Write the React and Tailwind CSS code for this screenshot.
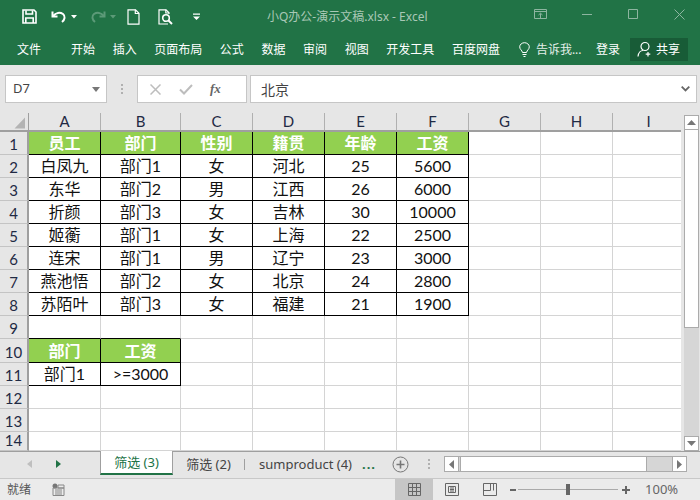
const CJK = "font-['Lato','Noto_Sans_CJK_SC',sans-serif]";
const UI = "font-['Noto_Sans','Noto_Sans_CJK_SC',sans-serif]";

const colWidths = [72, 80, 72, 72, 72, 72, 72, 72, 72];
const colNames = ['A', 'B', 'C', 'D', 'E', 'F', 'G', 'H', 'I'];
const rowHeights = [23, 23, 23, 23, 23, 23, 23, 23, 23, 24, 23, 23, 23, 19];

const data = [
  ['员工', '部门', '性别', '籍贯', '年龄', '工资'],
  ['白凤九', '部门1', '女', '河北', '25', '5600'],
  ['东华', '部门2', '男', '江西', '26', '6000'],
  ['折颜', '部门3', '女', '吉林', '30', '10000'],
  ['姬蘅', '部门1', '女', '上海', '22', '2500'],
  ['连宋', '部门1', '男', '辽宁', '23', '3000'],
  ['燕池悟', '部门2', '女', '北京', '24', '2800'],
  ['苏陌叶', '部门3', '女', '福建', '21', '1900'],
];
const crit = [
  ['部门', '工资'],
  ['部门1', '>=3000'],
];

function getCell(r, c) {
  if (r < 8 && c < 6) return { text: data[r][c], head: r === 0, black: true };
  if ((r === 9 || r === 10) && c < 2) return { text: crit[r - 9][c], head: r === 9, black: true };
  return { text: '', head: false, black: false };
}

function Sheet() {
  const rows = rowHeights.map((h, r) => (
    <div key={r} className="flex" style={{ height: h }}>
      <div className={`w-[29px] shrink-0 bg-[#e6e6e6] border-r-2 border-b border-r-[#9f9f9f] border-b-[#c4c4c4] flex items-end justify-center text-[#1f2a44] text-[15px] leading-[20px] ${CJK}`}>
        {r + 1}
      </div>
      {colWidths.map((w, c) => {
        const { text, head, black } = getCell(r, c);
        const below = r === 8 && c < 2;
        const rb = black ? 'border-r-black' : (r === 0 || r < 8) && c === 5 ? 'border-r-black' : 'border-r-[#d4d4d4]';
        const bb = black || below ? 'border-b-black' : 'border-b-[#d4d4d4]';
        return (
          <div
            key={c}
            style={{ width: w }}
            className={`shrink-0 border-r border-b ${rb} ${bb} flex items-center justify-center text-[16px] leading-none whitespace-nowrap ${CJK} ${head ? 'bg-[#92d050] text-white font-bold' : 'bg-white text-[#111]'}`}
          >
            {text}
          </div>
        );
      })}
    </div>
  ));
  return (
    <div className="relative w-[681px] overflow-hidden">
      <div className="flex h-[19px] w-max bg-[#e6e6e6] border-b-2 border-b-[#9f9f9f]">
        <div className="w-[29px] shrink-0 border-r border-[#9f9f9f] flex items-end justify-end pr-[2px] pb-[1px]">
          <svg width="12" height="12" viewBox="0 0 12 12"><path d="M11 0.5V11.5H0.5Z" fill="#b4b4b4" /></svg>
        </div>
        {colWidths.map((w, c) => (
          <div key={c} style={{ width: w }} className={`shrink-0 border-r border-[#b0b0b0] flex items-center justify-center text-[15px] text-[#1f2a44] leading-none ${CJK}`}>
            {colNames[c]}
          </div>
        ))}
      </div>
      <div className="w-max">{rows}</div>
    </div>
  );
}

function VScroll() {
  return (
    <div className="w-[19px] flex flex-col pl-[3px] pt-[2px] bg-[#e6e6e6]">
      <div className="w-[15px] h-[15px] bg-white border border-[#ababab] flex items-center justify-center">
        <svg width="9" height="5" viewBox="0 0 9 5"><path d="M4.5 0L9 5H0Z" fill="#777" /></svg>
      </div>
      <div className="w-[15px] h-[198px] bg-white border-x border-b border-[#ababab]" />
      <div className="w-[15px] flex-1 bg-[#d6d6d6]" />
      <div className="w-[15px] h-[15px] bg-white border border-[#ababab] flex items-center justify-center">
        <svg width="9" height="5" viewBox="0 0 9 5"><path d="M4.5 5L9 0H0Z" fill="#777" /></svg>
      </div>
    </div>
  );
}

function TitleBar() {
  return (
    <div className="h-[33px] flex items-center relative">
      <div className="flex items-center pl-[22px]">
        <svg width="15" height="15" viewBox="0 0 15 15" fill="none" stroke="#fff" strokeWidth="1.6">
          <path d="M1 1H12L14 3V14H1Z" />
          <path d="M4 1.5V5H10.5V1.5" />
          <path d="M3.8 14V9H11.2V14" />
        </svg>
        <svg className="ml-[14px]" width="16" height="14" viewBox="0 0 16 14" fill="none" stroke="#fff" strokeWidth="2">
          <path d="M1.5 1.5V6.5H6.5" />
          <path d="M2 6C5 2.5 9 2 12 4C14.5 6 14 9.5 11 12" />
        </svg>
        <svg className="ml-[4px]" width="6" height="4" viewBox="0 0 6 4"><path d="M0 0H6L3 3.5Z" fill="#fff" /></svg>
        <svg className="ml-[13px]" width="16" height="14" viewBox="0 0 16 14" fill="none" stroke="#5c9a78" strokeWidth="2">
          <path d="M14.5 1.5V6.5H9.5" />
          <path d="M14 6C11 2.5 7 2 4 4C1.5 6 2 9.5 5 12" />
        </svg>
        <svg className="ml-[4px]" width="6" height="4" viewBox="0 0 6 4"><path d="M0 0H6L3 3.5Z" fill="#5c9a78" /></svg>
        <svg className="ml-[11px]" width="13" height="16" viewBox="0 0 13 16" fill="none" stroke="#fff" strokeWidth="1.2">
          <path d="M1 .8H8.5L12 4.3V15.2H1Z" />
          <path d="M8.3 .8V4.5H12" />
        </svg>
        <svg className="ml-[18px]" width="15" height="16" viewBox="0 0 15 16" fill="none" stroke="#fff" strokeWidth="1.2">
          <path d="M10 15H1V.8H8L11 3.8V5" />
          <path d="M7.8 .8V4H11" />
          <circle cx="8" cy="9" r="3.3" strokeWidth="1.6" />
          <path d="M10.5 11.5L14 15" strokeWidth="2" />
        </svg>
        <svg className="ml-[20px]" width="7" height="7" viewBox="0 0 7 7"><path d="M0 0.5H7V1.7H0ZM0 3.5H7L3.5 7Z" fill="#fff" /></svg>
      </div>
      <div className={`absolute left-[267px] top-[8px] text-[12px] leading-[17px] text-[#a9c8b6] whitespace-nowrap ${UI}`}>
        小Q办公-演示文稿.xlsx - Excel
      </div>
      <div className="absolute right-0 top-0 h-[33px] flex items-center">
        <svg className="absolute left-[-166px] top-[9px]" width="13" height="10" viewBox="0 0 13 10" fill="none" stroke="#8db5a0"><path d="M.5.5H12.5V9.5H.5ZM.5 2.5H12.5M6.5 9V4.5M4.5 6L6.5 4.2L8.5 6" /></svg>
        <svg className="absolute left-[-118px] top-[14px]" width="10" height="1"><path d="M0 .5H10" stroke="#8db5a0" /></svg>
        <svg className="absolute left-[-72px] top-[9px]" width="10" height="10" fill="none"><path d="M.5.5H9.5V9.5H.5Z" stroke="#8db5a0" /></svg>
        <svg className="absolute left-[-26px] top-[9px]" width="11" height="11" fill="none"><path d="M.5.5L10.5 10.5M10.5.5L.5 10.5" stroke="#8db5a0" /></svg>
      </div>
    </div>
  );
}

function RibbonTabs() {
  const tabs = ['开始', '插入', '页面布局', '公式', '数据', '审阅', '视图', '开发工具', '百度网盘'];
  return (
    <div className={`h-[32px] flex items-center text-white text-[12px] leading-[17px] whitespace-nowrap ${UI}`}>
      <span className="ml-[17px] mr-[30px]">文件</span>
      <div className="flex gap-[17.6px]">
        {tabs.map((t) => <span key={t}>{t}</span>)}
      </div>
      <svg className="ml-[19px]" width="11" height="15" viewBox="0 0 11 15" fill="none" stroke="#fff" strokeWidth="1">
        <path d="M3.5 10.5C3 8 .7 7.5.7 4.8C.7 2.5 3 .7 5.5 .7S10.3 2.5 10.3 4.8C10.3 7.5 8 8 7.500 10.5Z" />
        <path d="M3.500 12.500H7.500M4.500 14.500H6.500" />
      </svg>
      <span className="ml-[6px] text-[#e4efe9] w-[46px] overflow-hidden">告诉我...</span>
      <span className="ml-[14px]">登录</span>
      <div className="ml-[10px] w-[58px] h-[23px] bg-[#185c37] flex items-center pl-[7px] gap-[3px]">
        <svg width="16" height="16" viewBox="0 0 16 16" fill="none" stroke="#fff" strokeWidth="1.2">
          <circle cx="8" cy="5.500" r="4" />
          <path d="M1 15.500C1.500 11.500 4 9.500 6 9.500" />
          <path d="M11 11V15.500M8.700 13.200H13.300" />
        </svg>
        <span>共享</span>
      </div>
    </div>
  );
}

function FormulaBar() {
  return (
    <div className="h-[48px] bg-[#e6e6e6] flex items-start pt-[10px]">
      <div className={`ml-[5px] w-[102px] h-[28px] bg-white border border-[#c6c6c6] flex items-center pl-[7px] pr-[6px] justify-between text-[13px] text-[#444] ${UI}`}>
        <span>D7</span>
        <svg width="8" height="5" viewBox="0 0 8 5"><path d="M0 0H8L4 5Z" fill="#777" /></svg>
      </div>
      <div className="w-[30px] h-[28px] flex flex-col items-center justify-center gap-[2px]">
        <span className="w-[2px] h-[2px] bg-[#b0b0b0]" />
        <span className="w-[2px] h-[2px] bg-[#b0b0b0]" />
        <span className="w-[2px] h-[2px] bg-[#b0b0b0]" />
      </div>
      <div className="w-[110px] h-[28px] bg-white border border-[#c6c6c6] flex items-center">
        <svg className="ml-[12px]" width="11" height="11" viewBox="0 0 11 11" fill="none" stroke="#bdbdbd" strokeWidth="1.500"><path d="M.5.5L10.500 10.500M10.500.5L.5 10.500" /></svg>
        <svg className="ml-[18px]" width="14" height="11" viewBox="0 0 14 11" fill="none" stroke="#bdbdbd" strokeWidth="2"><path d="M1 5.500L5 9.500L13 1" /></svg>
        <span className="ml-[17px] text-[13px] italic font-bold text-[#666] font-['Liberation_Serif',serif]">fx</span>
      </div>
      <div className={`ml-[3px] w-[447px] h-[28px] bg-white border border-[#c6c6c6] flex items-center pl-[10px] pr-[6px] justify-between text-[14px] text-[#444] ${UI}`}>
        <span>北京</span>
        <svg width="9" height="6" viewBox="0 0 9 6" fill="none" stroke="#666" strokeWidth="1.800"><path d="M.7.7L4.500 4.500L8.300.7" /></svg>
      </div>
    </div>
  );
}

function TabsBar() {
  return (
    <div className="h-[27px] bg-[#e6e6e6] border-t border-[#9f9f9f] flex items-start relative">
      <div className="w-[100px] h-[24px] flex items-center">
        <svg className="ml-[27px]" width="5" height="8" viewBox="0 0 5 8"><path d="M5 0V8L0 4Z" fill="#bfbfbf" /></svg>
        <svg className="ml-[24px]" width="5" height="8" viewBox="0 0 5 8"><path d="M0 0V8L5 4Z" fill="#217346" /></svg>
      </div>
      <div className={`w-[73px] h-[24px] bg-white border-x border-[#9f9f9f] border-b-2 border-b-[#217346] flex items-center justify-center text-[13px] text-[#217346] leading-none ${UI} -mt-px`}>
        筛选 (3)
      </div>
      <div className={`h-[24px] flex items-center text-[13px] text-[#444] leading-none whitespace-nowrap ${UI}`}>
        <span className="w-[71px] text-center">筛选 (2)</span>
        <span className="w-px h-[11px] bg-[#9f9f9f]" />
        <span className="ml-[14px] w-[98px] overflow-hidden">sumproduct (4)</span>
        <span className="ml-[5px] text-[#217346] font-bold tracking-[1px]">...</span>
      </div>
      <svg className="ml-[16px] mt-[4px]" width="17" height="17" viewBox="0 0 17 17" fill="none" stroke="#777">
        <circle cx="8.500" cy="8.500" r="7.500" />
        <path d="M4.500 8.500H12.500M8.500 4.500V12.500" strokeWidth="1.600" />
      </svg>
      <div className="ml-[19px] mt-[7px] flex flex-col gap-[2px]">
        <span className="w-[2px] h-[2px] bg-[#b0b0b0]" />
        <span className="w-[2px] h-[2px] bg-[#b0b0b0]" />
        <span className="w-[2px] h-[2px] bg-[#b0b0b0]" />
      </div>
      <div className="ml-[14px] mt-[4px] w-[243px] h-[16px] flex border border-[#ababab] bg-[#d6d6d6]">
        <div className="w-[14px] bg-white border-r border-[#ababab] flex items-center justify-center">
          <svg width="5" height="9" viewBox="0 0 5 9"><path d="M5 0V9L0 4.500Z" fill="#777" /></svg>
        </div>
        <div className="w-[187px] bg-white border-x border-[#ababab] ml-[1px]" />
        <div className="flex-1" />
        <div className="w-[14px] bg-white border-l border-[#ababab] flex items-center justify-center">
          <svg width="5" height="9" viewBox="0 0 5 9"><path d="M0 0V9L5 4.500Z" fill="#777" /></svg>
        </div>
      </div>
    </div>
  );
}

function StatusBar() {
  return (
    <div className={`h-[22px] bg-[#ebebeb] border-t border-[#c8c8c8] flex items-center text-[12px] text-[#555] ${UI}`}>
      <span className="ml-[7px]">就绪</span>
      <svg className="ml-[21px]" width="13" height="13" viewBox="0 0 13 13">
        <circle cx="3" cy="3" r="2.500" fill="#777" />
        <path d="M1 5H12V12.500H1Z" fill="none" stroke="#888" />
        <path d="M6 2H12V5H6ZM3 7H10M3 9H10M3 11H10" stroke="#888" fill="none" />
      </svg>
      <div className="ml-[330px] w-[38px] h-[21px] bg-[#c6c6c6] flex items-center justify-center">
        <svg width="13" height="13" viewBox="0 0 13 13" fill="none" stroke="#666"><path d="M.5.5H12.500V12.500H.5ZM.5 4.500H12.500M.5 8.500H12.500M4.500.5V12.500M8.500.5V12.500" /></svg>
      </div>
      <svg className="ml-[12px]" width="14" height="13" viewBox="0 0 14 13" fill="none" stroke="#666"><path d="M.5.5H13.500V12.500H.5ZM3.500 3.500H10.500V9.500H3.500ZM5 5H9M5 6.500H9M5 8H9" /></svg>
      <svg className="ml-[24px]" width="14" height="13" viewBox="0 0 14 13" fill="none" stroke="#666"><path d="M.5.5H13.500V12.500H.5ZM.5 7.500H7.500V.5M10.500.5V7.500" /></svg>
      <div className="ml-[13px] w-[6px] h-[2px] bg-[#666]" />
      <div className="relative ml-[2px] w-[100px] h-[1px] bg-[#aaa]">
        <div className="absolute left-[48px] top-[-5px] w-[4px] h-[11px] bg-[#666]" />
      </div>
      <svg className="ml-[4px]" width="8" height="8" viewBox="0 0 8 8"><path d="M0 3H3V0H5V3H8V5H5V8H3V5H0Z" fill="#666" /></svg>
      <span className="ml-[15px] text-[13px] text-[#666]">100%</span>
    </div>
  );
}

export default function App() {
  return (
    <div className="w-[700px] h-[500px] overflow-hidden flex flex-col bg-[#e6e6e6]">
      <div className="h-[65px] bg-[#217346]">
        <TitleBar />
        <RibbonTabs />
      </div>
      <FormulaBar />
      <div className="h-[338px] flex overflow-hidden">
        <Sheet />
        <VScroll />
      </div>
      <TabsBar />
      <StatusBar />
    </div>
  );
}
